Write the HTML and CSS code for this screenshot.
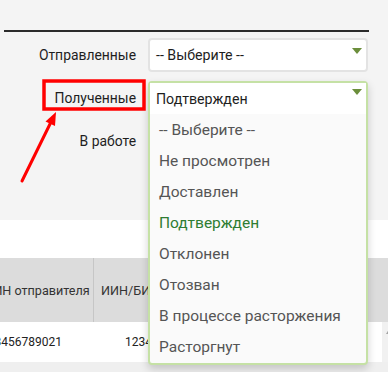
FILE: index.html
```html
<!DOCTYPE html>
<html lang="ru">

<head>
    <meta charset="UTF-8">
    <meta name="viewport" content="width=device-width, initial-scale=1.0">
    <title>Документы</title>
    <link rel="stylesheet" href="styles.css">
</head>

<body>

    <div id="page">

        <!-- filter panel -->
        <section class="filters">
            <div class="rule"></div>

            <div class="field">
                <label class="field-label">Отправленные</label>
                <div class="select">
                    <span class="select-value">-- Выберите --</span>
                    <i class="caret"></i>
                </div>
            </div>

            <div class="field">
                <label class="field-label">Полученные</label>
                <div class="select-holder">
                    <!-- opened dropdown lies over the rows below -->
                    <div class="dropdown">
                        <div class="dropdown-head">
                            <span class="select-value">Подтвержден</span>
                            <i class="caret"></i>
                        </div>
                        <ul class="options">
                            <li>-- Выберите --</li>
                            <li>Не просмотрен</li>
                            <li>Доставлен</li>
                            <li class="selected">Подтвержден</li>
                            <li>Отклонен</li>
                            <li>Отозван</li>
                            <li>В процессе расторжения</li>
                            <li>Расторгнут</li>
                        </ul>
                    </div>
                </div>
            </div>

            <div class="field">
                <label class="field-label">В работе</label>
                <div class="select">
                    <span class="select-value">-- Выберите --</span>
                    <i class="caret"></i>
                </div>
            </div>
        </section>

        <!-- documents table -->
        <section class="results">
            <div class="table-clip">
                <div class="table">
                    <div class="thead">
                        <div class="cell">ИИН/БИН отправителя</div>
                        <div class="cell">ИИН/БИН получателя</div>
                        <div class="cell">Номер документа</div>
                    </div>
                    <div class="tbody">
                        <div class="row">
                            <div class="cell">123456789021</div>
                            <div class="cell">123456789012</div>
                            <div class="cell">000123</div>
                        </div>
                        <div class="scroll-track"><i class="scroll-up"></i></div>
                    </div>
                </div>
            </div>
        </section>

        <!-- red annotation: box round the label and an arrow to it -->
        <svg class="annotation" width="388" height="372" viewBox="0 0 388 372">
            <rect x="44" y="81" width="100" height="28" fill="none" stroke="#ff0000" stroke-width="3.5" />
            <line x1="22" y1="181" x2="51" y2="122" stroke="#ff0000" stroke-width="3" stroke-linecap="round" />
            <polygon points="56,112 45.5,121.5 55,126" fill="#ff0000" />
        </svg>

    </div>

</body>

</html>
```

FILE: styles.css
```css
body {
    margin: 0;
    font-family: Roboto, 'Liberation Sans', sans-serif;
    color: #222;
}

#page {
    position: relative;
    width: 388px;
    height: 372px;
    overflow: hidden;
    background-color: #efefef;
}

/* upper panel with the filters */
.filters {
    height: 190px;
    padding-top: 30px;
    background-color: #f4f4f4;
}

.rule {
    height: 2px;
    margin: 0 19px 6px 4px;
    background-color: #2b2b2b;
}

.field {
    display: grid;
    grid-template-columns: 136px 220px;
    column-gap: 12px;
    height: 34px;
    margin-bottom: 9px;
}

.field-label {
    align-self: center;
    text-align: right;
    font-size: 13.9px;
    color: #1e1e1e;
}

.select {
    display: flex;
    align-items: center;
    box-sizing: border-box;
    height: 34px;
    padding: 0 4px 0 6px;
    border: 2px solid #e3e3e3;
    border-radius: 4px;
    background-color: #fff;
}

.select-value {
    font-size: 14.2px;
    color: #1e1e1e;
}

/* green triangle of the select */
.caret {
    align-self: flex-start;
    margin: 8px 0 0 auto;
    border-left: 5px solid transparent;
    border-right: 5px solid transparent;
    border-top: 6px solid #6b8e3b;
}

.select-holder {
    position: relative;
}

.dropdown {
    position: absolute;
    top: 0;
    left: 0;
    right: 0;
    z-index: 2;
    border: 2px solid #c5e1a5;
    border-radius: 4px;
    background-color: #fafafa;
    box-shadow: 0 4px 8px rgba(0, 0, 0, 0.18);
}

.dropdown-head {
    display: flex;
    align-items: center;
    height: 31px;
    padding: 0 4px 0 6px;
    background-color: #fff;
}

.dropdown-head .caret {
    margin-top: 6px;
}

.options {
    list-style: none;
    margin: 0;
    padding: 0 0 1px;
    font-size: 15.5px;
    color: #555;
}

.options li {
    height: 31px;
    line-height: 32px;
    padding-left: 9px;
}

.options li.selected {
    color: #2e7d32;
}

/* lower panel with the table */
.results {
    height: 104px;
    padding-top: 38px;
    background-color: #fff;
}

.table-clip {
    overflow: hidden;
}

/* table is scrolled to the right a little */
.table {
    margin-left: -50px;
}

.thead {
    display: flex;
    height: 64px;
    background-color: #dcdcdc;
    font-size: 12.6px;
    color: #333;
}

.thead .cell {
    border-right: 1px solid #c6c6c6;
}

.thead .cell:last-child {
    border-right: 0;
}

.cell {
    display: flex;
    align-items: center;
    justify-content: center;
    flex: 0 0 143px;
    white-space: nowrap;
    overflow: hidden;
}

.tbody {
    display: flex;
    height: 40px;
}

.row {
    display: flex;
    flex: 0 0 429px;
    font-size: 12px;
    color: #222;
}

.row .cell {
    border-right: 1px solid transparent;
}

.scroll-track {
    flex: 0 0 9px;
    background-color: #f1f1f1;
}

.scroll-up {
    display: block;
    width: 0;
    margin: 7px 0 0 4px;
    border-left: 3px solid transparent;
    border-right: 3px solid transparent;
    border-bottom: 5px solid #a3a3a3;
}

.annotation {
    position: absolute;
    top: 0;
    left: 0;
    z-index: 3;
    pointer-events: none;
}
```
